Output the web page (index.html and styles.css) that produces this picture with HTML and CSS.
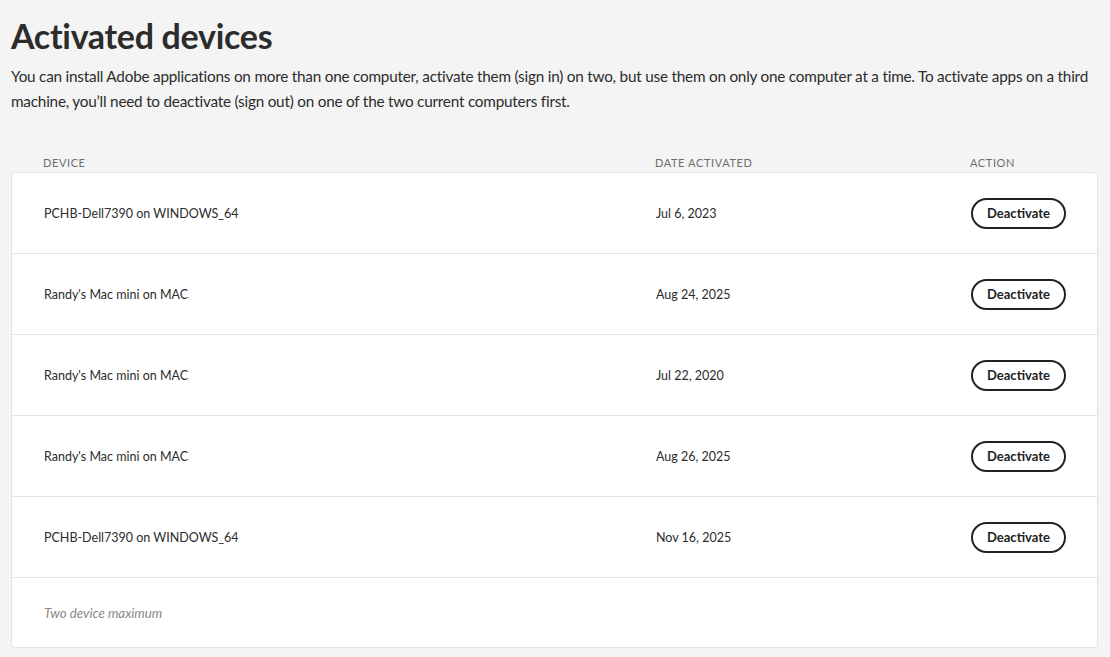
FILE: index.html
```html
<!DOCTYPE html>
<html lang="en">
<head>
    <meta charset="UTF-8">
    <meta name="viewport" content="width=device-width, initial-scale=1.0">
    <title>Activated devices</title>
    <link rel="stylesheet" href="styles.css">
</head>
<body>
    <main class="page">
        <h1 class="page-title">Activated devices</h1>
        <p class="intro">You can install Adobe applications on more than one computer, activate them (sign in) on two, but use them on only one computer at a time. To activate apps on a third machine, you’ll need to deactivate (sign out) on one of the two current computers first.</p>

        <div class="table-head">
            <span>Device</span>
            <span>Date activated</span>
            <span>Action</span>
        </div>

        <section class="device-card">
            <div class="device-row">
                <span>PCHB-Dell7390 on WINDOWS_64</span>
                <span>Jul 6, 2023</span>
                <span><button class="deactivate-btn">Deactivate</button></span>
            </div>
            <div class="device-row">
                <span>Randy's Mac mini on MAC</span>
                <span>Aug 24, 2025</span>
                <span><button class="deactivate-btn">Deactivate</button></span>
            </div>
            <div class="device-row">
                <span>Randy's Mac mini on MAC</span>
                <span>Jul 22, 2020</span>
                <span><button class="deactivate-btn">Deactivate</button></span>
            </div>
            <div class="device-row">
                <span>Randy's Mac mini on MAC</span>
                <span>Aug 26, 2025</span>
                <span><button class="deactivate-btn">Deactivate</button></span>
            </div>
            <div class="device-row">
                <span>PCHB-Dell7390 on WINDOWS_64</span>
                <span>Nov 16, 2025</span>
                <span><button class="deactivate-btn">Deactivate</button></span>
            </div>
            <div class="card-footer">Two device maximum</div>
        </section>
    </main>
</body>
</html>
```

FILE: styles.css
```css
:root {
    --bg-color: #f4f4f4;
    --text-color: #2c2c2c;
    --muted: #6e6e6e;
    --line: #e4e4e4;
}

* {
    margin: 0;
    padding: 0;
    box-sizing: border-box;
}

body {
    font-family: Lato, "Noto Sans", sans-serif;
    background-color: var(--bg-color);
    color: var(--text-color);
}

.page {
    padding: 15px 12px 10px 11px;
}

.page-title {
    font-size: 34px;
    font-weight: 700;
    line-height: 42px;
    color: #2c2c2c;
    letter-spacing: -0.3px;
}

.intro {
    margin-top: 7px;
    font-size: 15.3px;
    letter-spacing: -0.22px;
    line-height: 25px;
    color: #2c2c2c;
}

.table-head,
.device-row {
    display: grid;
    grid-template-columns: 612px 315px auto;
    align-items: center;
}

.table-head {
    margin-top: 41px;
    padding: 0 0 2px 32px;
    font-size: 11px;
    letter-spacing: 0.6px;
    text-transform: uppercase;
    color: var(--muted);
    line-height: 15px;
}

.device-card {
    background-color: #fff;
    border: 1px solid var(--line);
    border-radius: 4px;
}

.device-row {
    height: 81px;
    padding-left: 32px;
    border-bottom: 1px solid var(--line);
    font-size: 12.5px;
}

.deactivate-btn {
    font-family: inherit;
    font-size: 13px;
    font-weight: 700;
    color: #222;
    background: #fff;
    border: 2px solid #222;
    border-radius: 16px;
    width: 95px;
    height: 31px;
    cursor: pointer;
}

.deactivate-btn:hover {
    background-color: #f0f0f0;
}

.card-footer {
    height: 69px;
    padding: 27px 0 0 32px;
    font-size: 13.3px;
    font-style: italic;
    color: #8a8a8a;
}
```
